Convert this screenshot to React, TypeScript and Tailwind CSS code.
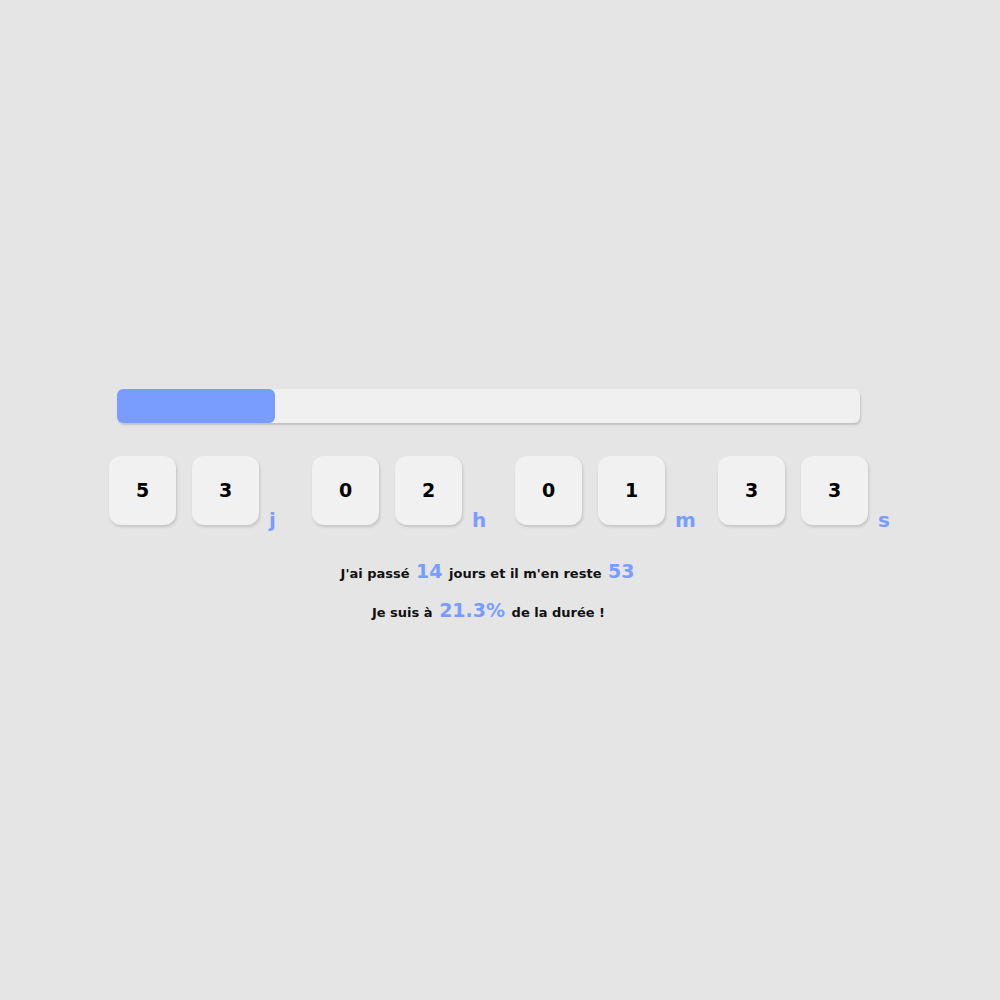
const digits = [
  { values: ['5', '3'], unit: 'j' },
  { values: ['0', '2'], unit: 'h' },
  { values: ['0', '1'], unit: 'm' },
  { values: ['3', '3'], unit: 's' },
]

const progress = 21.3

export default function App() {
  return (
    <div
      className="min-h-screen w-full bg-[#e5e5e5] pt-[389px]"
      style={{ fontFamily: '"DejaVu Sans", "Noto Sans", sans-serif' }}
    >
      <div className="ml-[117px] w-[743px] h-[34px] rounded-[6px] bg-[#f0f0f0] shadow-[1px_2px_2px_rgba(0,0,0,0.15)]">
        <div className="h-full rounded-[6px] bg-[#799dff]" style={{ width: `${progress}%` }} />
      </div>

      <div className="ml-[109px] mt-[33px] flex">
        {digits.map((group) => (
          <div key={group.unit} className="flex w-[203px] items-end">
            <div className="flex gap-4">
              {group.values.map((v, i) => (
                <div
                  key={i}
                  className="flex h-[69px] w-[67px] items-center justify-center rounded-[12px] bg-[#f1f1f1] text-[19px] font-bold text-black shadow-[1px_2px_3px_rgba(0,0,0,0.15)]"
                >
                  {v}
                </div>
              ))}
            </div>
            <span className="ml-[10px] -mb-[5px] text-[20px] font-bold leading-none text-[#799dff]">
              {group.unit}
            </span>
          </div>
        ))}
      </div>

      <div className="ml-[117px] mt-[34px] w-[743px] text-center text-[13px] font-bold text-[#111]">
        <p className="leading-[24px]">
          J'ai passé <span className="px-[2px] text-[19px] font-semibold text-[#799dff]">14</span> jours et il m'en reste{' '}
          <span className="px-[2px] text-[19px] font-semibold text-[#799dff]">53</span>
        </p>
        <p className="mt-[12px] leading-[24px]">
          Je suis à <span className="px-[2px] text-[19px] font-semibold text-[#799dff]">21.3%</span> de la durée !
        </p>
      </div>
    </div>
  )
}
